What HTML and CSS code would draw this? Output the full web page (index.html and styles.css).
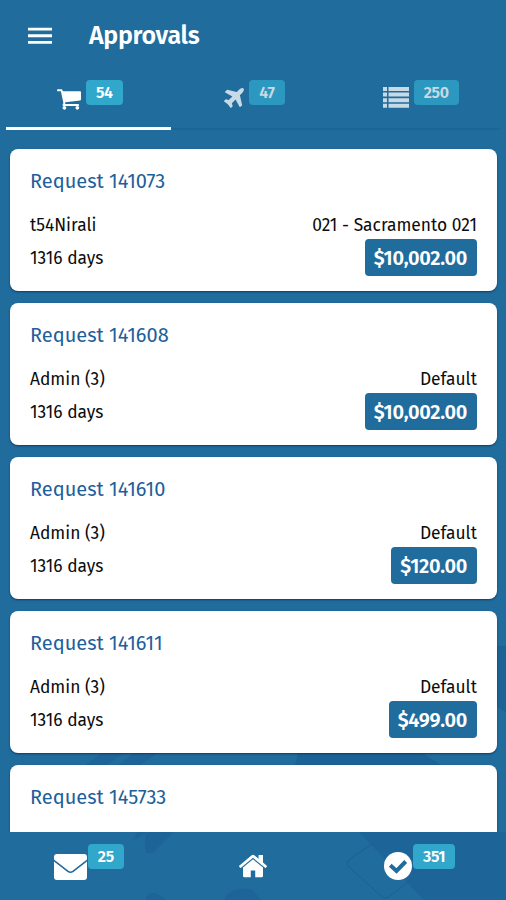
FILE: index.html
```
<!DOCTYPE html>
<html lang="en">
<head>
  <meta charset="UTF-8">
  <meta name="viewport" content="width=device-width, initial-scale=1">
  <title>Approvals</title>
  <link rel="stylesheet" href="styles.css">
</head>
<body>
  <!-- Background shapes -->
  <svg class="backdrop" viewBox="0 0 506 900">
    <path class="shade" d="M497 646h9v66l-9-5zM298 753h124l27 17H294z"/>
    <path class="shade soft" d="M359 832h147v68h-82zM102 753h22l-19 13H84zM134 753h24l-19 13h-22zM145 832h29l-20 20q-9 4-9-4zM133 840l16-8h-12zM145 900q2-8 10-7l12 7zM224 900q6-14 28-11l9 11z"/>
    <path class="outline" d="M372 844l-22 15q-5 4-1 8l32 29q5 4 9 0l22-17"/>
  </svg>

  <div class="app">
    <header>
      <button class="menu-btn" aria-label="Menu">
        <svg width="24" height="18" viewBox="0 0 24 18"><path d="M0 .7h24v2.900H0zM0 7.300h24v2.900H0zM0 13.900h24v2.900H0z"/></svg>
      </button>
      <h1>Approvals</h1>
    </header>

    <!-- Tabs -->
    <nav class="tabs">
      <a class="tab active" href="#">
        <svg class="cart" viewBox="64 256 1664 1408"><path d="M704 1536q0 52-38 90t-90 38-90-38-38-90 38-90 90-38 90 38 38 90zm896 0q0 52-38 90t-90 38-90-38-38-90 38-90 90-38 90 38 38 90zm128-1088v512q0 24-16.500 42.500t-40.500 21.500l-1044 122q13 60 13 70 0 16-24 64h920q26 0 45 19t19 45-19 45-45 19h-1024q-26 0-45-19t-19-45q0-11 8-31.500t16-36 21.500-40 15.500-29.500l-177-823h-204q-26 0-45-19t-19-45 19-45 45-19h256q16 0 28.500 6.500t19.500 15.500 13 24.500 8 26 5.500 29.500 4.500 26h1201q26 0 45 19t19 45z"/></svg>
        <span class="badge">54</span>
      </a>
      <a class="tab" href="#">
        <svg class="plane" viewBox="190 128 1410 1410"><path d="M1568 160q44 52 12 148t-108 172l-161 161 160 696q5 19-12 33l-128 96q-7 6-19 6-4 0-7-1-15-3-21-16l-279-508-259 259 53 194q5 17-8 31l-96 96q-9 9-23 9h-2q-15-2-24-13l-189-252-252-189q-11-7-13-23-1-13 9-25l96-97q9-9 23-9 6 0 8 1l194 53 259-259-508-279q-14-8-17-24-2-16 9-27l128-128q14-13 30-8l665 159 160-160q76-76 172-108t148 12z"/></svg>
        <span class="badge">47</span>
      </a>
      <a class="tab" href="#">
        <svg class="list" viewBox="0 0 26 21"><path d="M0 0h4v4H0zM5.500 0H26v4H5.500zM0 5.600h4v4H0zM5.500 5.600H26v4H5.500zM0 11.200h4v4H0zM5.500 11.200H26v4H5.500zM0 16.800h4v4H0zM5.500 16.800H26v4H5.500z"/></svg>
        <span class="badge">250</span>
      </a>
    </nav>

    <!-- Requests -->
    <main>
      <div class="card">
        <h2>Request 141073</h2>
        <div class="row"><span>t54Nirali</span><span>021 - Sacramento 021</span></div>
        <div class="row"><span>1316 days</span><span class="amount">$10,002.00</span></div>
      </div>
      <div class="card">
        <h2>Request 141608</h2>
        <div class="row"><span>Admin (3)</span><span>Default</span></div>
        <div class="row"><span>1316 days</span><span class="amount">$10,002.00</span></div>
      </div>
      <div class="card">
        <h2>Request 141610</h2>
        <div class="row"><span>Admin (3)</span><span>Default</span></div>
        <div class="row"><span>1316 days</span><span class="amount">$120.00</span></div>
      </div>
      <div class="card">
        <h2>Request 141611</h2>
        <div class="row"><span>Admin (3)</span><span>Default</span></div>
        <div class="row"><span>1316 days</span><span class="amount">$499.00</span></div>
      </div>
      <div class="card">
        <h2>Request 145733</h2>
      </div>
    </main>

    <!-- Bottom bar -->
    <footer>
      <a class="mail-link" href="#">
        <svg class="mail" viewBox="0 0 33 26"><path d="M3 0h27q3 0 3 3v2.500L18.500 16.700q-2 1.500-4 0L0 5.500V3q0-3 3-3zM0 7.500l13.500 10.400q3 2 6 0L33 7.500V23q0 3-3 3H3q-3 0-3-3z"/></svg>
        <span class="badge">25</span>
      </a>
      <a class="home-link" href="#">
        <svg class="home" viewBox="90 253 1612 1283"><path d="M1472 992v480q0 26-19 45t-45 19h-384v-384h-256v384h-384q-26 0-45-19t-19-45v-480q0-1 .5-3t.5-3l575-474 575 474q1 2 1 6zm223-69l-62 74q-8 9-21 11h-3q-13 0-21-7l-692-577-692 577q-12 8-24 7-13-2-21-11l-62-74q-8-10-7-23.500t11-21.500l719-599q32-26 76-26t76 26l244 204v-195q0-14 9-23t23-9h192q14 0 23 9t9 23v408l219 182q10 8 11 21.500t-7 23.500z"/></svg>
      </a>
      <a class="done-link" href="#">
        <svg class="done" viewBox="0 0 28 28"><circle cx="14" cy="14" r="14"/><path class="tick" d="M6.300 13.300l6.200 5.700 9.200-9.500"/></svg>
        <span class="badge">351</span>
      </a>
    </footer>
  </div>
</body>
</html>
```
FILE: styles.css
```
/* General Styles */
* {
  margin: 0;
  padding: 0;
  box-sizing: border-box;
}

body {
  background-color: #206c9d;
  color: #0c0c0c;
  font-family: 'Fira Sans', 'Noto Sans', sans-serif;
  overflow: hidden;
}

a {
  text-decoration: none;
}

svg {
  display: block;
  fill: #fff;
  flex: none;
}

.backdrop {
  position: absolute;
  top: 0;
  left: 0;
  width: 506px;
  height: 900px;
  z-index: -1;
}

.backdrop .shade {
  fill: #1b6296;
}

.backdrop .soft {
  fill: #1d6598;
}

.backdrop .outline {
  fill: none;
  stroke: #1b6090;
}

.app {
  display: flex;
  flex-direction: column;
  height: 900px;
}

/* Header */
header {
  display: flex;
  align-items: center;
  height: 72px;
  padding-left: 28px;
  gap: 37px;
}

.menu-btn {
  background: none;
  border: none;
}

h1 {
  color: #fff;
  font-size: 25px;
  line-height: 30px;
  font-weight: 600;
  letter-spacing: -0.3px;
}

/* Tabs */
.tabs {
  display: grid;
  grid-template-columns: repeat(3, 1fr);
  height: 58px;
  margin: 0 6px 1px;
  border-bottom: 2px solid #1c6596;
}

.tab {
  display: flex;
  justify-content: center;
  align-items: flex-start;
  height: 58px;
  padding-top: 8px;
  padding-left: 3px;
  gap: 5px;
  border-bottom: 3px solid transparent;
}

.tab.active {
  border-bottom-color: #fff;
}

.tab:last-child {
  padding-left: 6px;
}

.tab:not(.active) svg,
.tab:not(.active) .badge {
  opacity: 0.75;
}

.badge {
  background-color: #30a7cb;
  color: #fff;
  font-size: 16px;
  font-weight: 600;
  line-height: 26px;
  height: 25px;
  padding: 0 10px;
  border-radius: 4px;
  letter-spacing: -0.3px;
}

.cart {
  width: 24px;
  height: 21px;
  margin-top: 9px;
}

.plane {
  width: 20px;
  height: 20px;
  margin-top: 8px;
}

.list {
  width: 26px;
  height: 21px;
  margin-top: 7px;
}

/* Request Cards */
main {
  flex: 1;
  display: flex;
  flex-direction: column;
  gap: 12px;
  padding: 18px 9px 0 10px;
  overflow: hidden;
}

.card {
  flex: none;
  height: 142px;
  padding: 17px 20px 0;
  background: #fff;
  border-radius: 8px;
  box-shadow: 0 1px 2px rgba(0, 30, 60, 0.6);
}

.card h2 {
  color: #1d609b;
  font-size: 20px;
  line-height: 30px;
  font-weight: 400;
  margin-bottom: 13px;
}

.row {
  display: flex;
  justify-content: space-between;
  align-items: center;
  height: 33px;
  font-size: 17.400px;
}

.amount {
  background-color: #206c9d;
  color: #fff;
  font-size: 20px;
  font-weight: 600;
  height: 37px;
  line-height: 39px;
  margin-top: -3px;
  padding: 0 10px 0 9px;
  border-radius: 4px;
  letter-spacing: -0.3px;
}

/* Bottom Bar */
footer {
  display: grid;
  grid-template-columns: repeat(3, 1fr);
  height: 68px;
}

footer a {
  display: flex;
  justify-content: center;
  align-items: flex-start;
  padding-top: 12px;
}

footer .badge {
  margin-left: 1px;
}

.mail-link {
  padding-left: 9px;
}

.home-link {
  padding-left: 1px;
}

.done-link {
  padding-right: 4px;
}

.mail {
  width: 33px;
  height: 26px;
  margin-top: 10px;
}

.home {
  width: 28px;
  height: 24px;
  margin-top: 10px;
}

.done {
  width: 28px;
  height: 28px;
  margin-top: 8px;
}

.tick {
  fill: none;
  stroke: #206c9d;
  stroke-width: 4;
}
```
